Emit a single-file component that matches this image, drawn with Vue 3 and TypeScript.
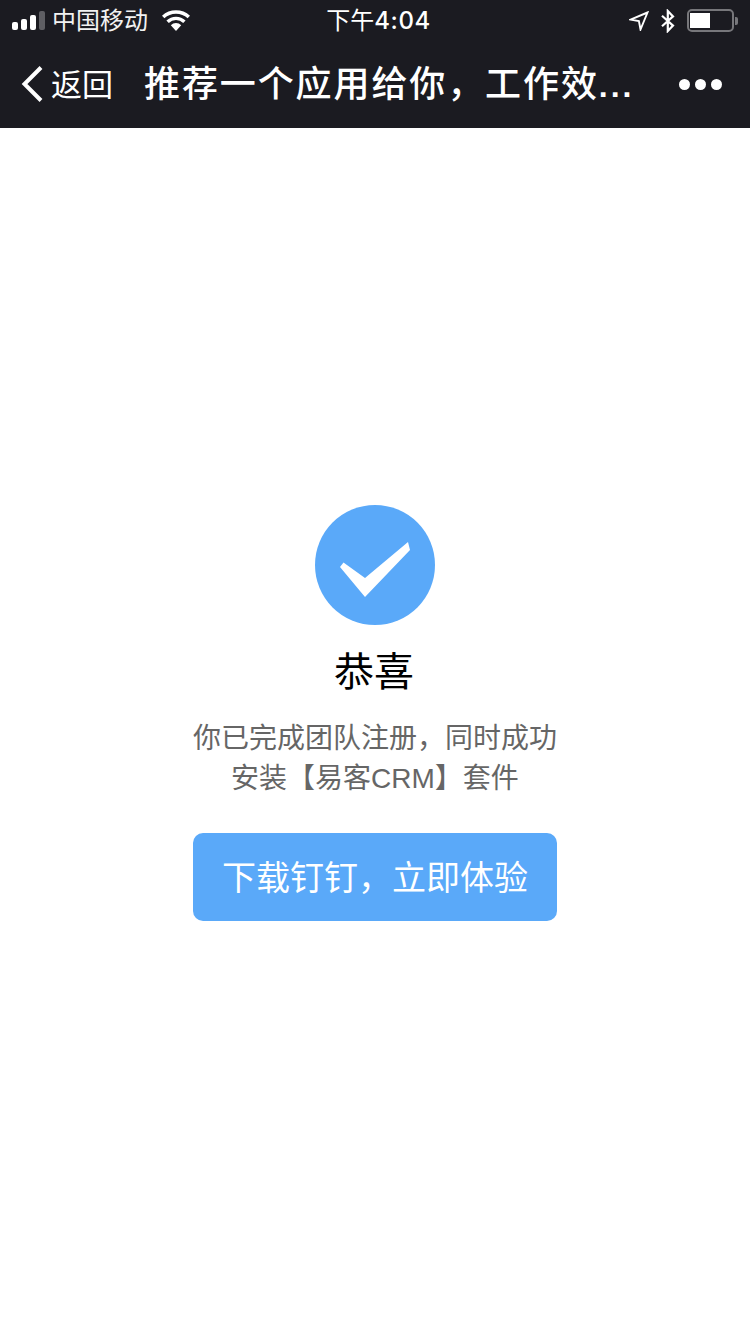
<script setup lang="ts">
const signalBars: number[] = [8, 11, 15, 19]
</script>

<template>
  <div class="page">
    <header class="top">
      <div class="status">
        <div class="status-left">
          <div class="signal">
            <i v-for="(h, n) in signalBars" :key="n" :class="{ off: n === 3 }" :style="{ height: h + 'px' }"></i>
          </div>
          <span class="carrier">中国移动</span>
          <svg class="wifi" width="28" height="21" viewBox="0 0 28 21">
            <path d="M14 21 8.800 15.200a7.400 7.400 0 0 1 10.400 0Z" fill="#fff" />
            <path d="M6.800 13a10.400 10.400 0 0 1 14.400 0l2.400-2.500a14 14 0 0 0-19.200 0Z" fill="#fff" />
            <path d="M2.400 8.300a16.800 16.800 0 0 1 23.200 0L28 5.700a20.400 20.400 0 0 0-28 0Z" fill="#fff" />
          </svg>
        </div>
        <span class="clock">下午<span class="digits">4:04</span></span>
        <div class="status-right">
          <svg class="arrow" width="20" height="20" viewBox="0 0 20 20">
            <path d="M18.500 1.500 1.500 8.600l8.400 1.500 1.600 8.400Z" fill="none" stroke="#fff" stroke-width="1.900" />
          </svg>
          <svg class="bt" width="16" height="24" viewBox="0 0 16 24">
            <path d="M2 6.800 13 16.600 7.800 22V2L13 7.400 2 17.200" fill="none" stroke="#fff" stroke-width="2.200" />
          </svg>
          <div class="battery">
            <div class="battery-body"><div class="battery-fill"></div></div>
            <div class="battery-tip"></div>
          </div>
        </div>
      </div>
      <nav class="nav">
        <div class="back">
          <svg width="24" height="38" viewBox="0 0 24 38">
            <path d="M21 2.500 4.500 19 21 35.500" fill="none" stroke="#fff" stroke-width="4" />
          </svg>
          <span>返回</span>
        </div>
        <div class="title">推荐一个应用给你，工作效<span class="dots">...</span></div>
        <div class="more"><i></i><i></i><i></i></div>
      </nav>
    </header>

    <main class="content">
      <svg class="check" width="120" height="120" viewBox="0 0 120 120">
        <circle cx="60" cy="60" r="60" fill="#5aa9f9" />
        <path d="M25 62 28.500 57.500 50 73 93 37 95 45 50 92Z" fill="#fff" />
      </svg>
      <h1>恭喜</h1>
      <p>你已完成团队注册，同时成功<br />安装【易客CRM】套件</p>
      <button type="button"><span>下载钉钉，立即体验</span></button>
    </main>
  </div>
</template>

<style>
html, body { margin: 0; background: #fff; }
</style>

<style scoped>
.page {
  width: 750px;
  height: 1334px;
  overflow: hidden;
  background: #fff;
  font-family: "Liberation Sans", "Noto Sans CJK SC", sans-serif;
}
.top {
  height: 128px;
  background: #1b1b21;
  color: #fff;
}
.status {
  height: 40px;
  padding: 2px 12px 0 12px;
  box-sizing: border-box;
  display: grid;
  grid-template-columns: 1fr auto 1fr;
  align-items: center;
}
.status-left { display: flex; align-items: center; }
.signal { display: flex; align-items: flex-end; gap: 3px; width: 33px; margin-top: -1px; }
.signal i { display: block; width: 6px; background: #fff; border-radius: 2px; }
.signal i.off { background: #5e5e63; }
.carrier { margin-left: 7px; font-size: 24px; line-height: 38px; color: #f2f2f2; }
.wifi { margin-left: 14px; margin-top: -2px; }
.clock { font-size: 24px; line-height: 38px; margin-left: 7px; }
.digits { font-family: Inter, "Liberation Sans", sans-serif; font-weight: 500; font-size: 24px; letter-spacing: 0.6px; }
.status-right { display: flex; align-items: center; justify-content: flex-end; }
.arrow { margin-right: 11px; margin-top: -1px; }
.bt { margin-right: 11px; margin-top: -1px; }
.battery { display: flex; align-items: center; margin-top: -1px; }
.battery-body {
  width: 47px;
  height: 23px;
  box-sizing: border-box;
  border: 2px solid #77777b;
  border-radius: 5px;
  padding: 2px 1px;
}
.battery-fill { width: 20px; height: 15px; background: #fff; }
.battery-tip { width: 3px; height: 8px; margin-left: 1px; background: #77777b; border-radius: 0 2px 2px 0; }
.nav {
  height: 88px;
  display: flex;
  align-items: center;
  padding: 0 0 0 20px;
}
.back { display: flex; align-items: center; width: 124px; flex: none; }
.back span { margin-left: 7px; font-size: 31px; line-height: 40px; padding-top: 3px; }
.title {
  width: 535px;
  flex: none;
  font-size: 36px;
  line-height: 44px;
  letter-spacing: 1.900px;
  font-weight: 500;
  white-space: nowrap;
  padding-top: 3px;
}
.dots { font-size: 32px; letter-spacing: 3px; font-weight: 700; }
.more { display: flex; gap: 5px; }
.more i { display: block; width: 11px; height: 11px; border-radius: 50%; background: #fff; }
.content {
  padding-top: 377px;
  display: flex;
  flex-direction: column;
  align-items: center;
}
.check { display: block; }
h1 {
  margin: 24px 2px 0 0;
  font-size: 40px;
  line-height: 46px;
  font-weight: 400;
  color: #000;
}
p {
  margin: 24px 0 0;
  font-size: 28px;
  line-height: 40px;
  text-align: center;
  color: #666;
}
button {
  margin-top: 34px;
  width: 364px;
  height: 88px;
  border: 0;
  border-radius: 10px;
  background: #5aa9f9;
  color: #fff;
  font-family: inherit;
  font-size: 34px;
  padding: 0 0 4px;
}
</style>
